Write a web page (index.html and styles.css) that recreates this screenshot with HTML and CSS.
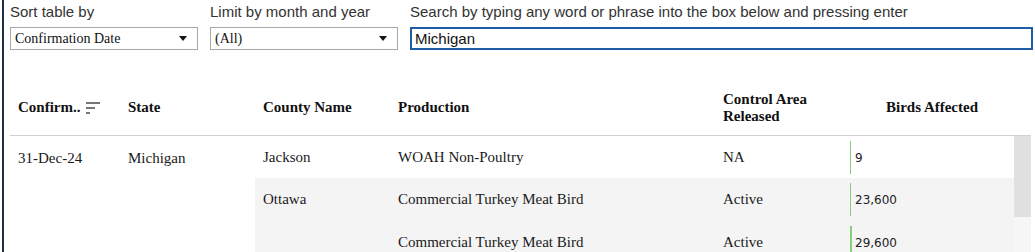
FILE: index.html
```html
<!DOCTYPE html>
<html>
<head>
<meta charset="utf-8">
<link rel="stylesheet" href="styles.css">
</head>
<body>
<div class="frame">
  <div class="controls">
    <div class="ctl ctl-sort">
      <div class="label">Sort table by</div>
      <div class="select"><span>Confirmation Date</span><span class="caret"></span></div>
    </div>
    <div class="ctl ctl-month">
      <div class="label">Limit by month and year</div>
      <div class="select"><span>(All)</span><span class="caret"></span></div>
    </div>
    <div class="ctl ctl-search">
      <div class="label">Search by typing any word or phrase into the box below and pressing enter</div>
      <div class="search">Michigan</div>
    </div>
  </div>
  <table class="grid">
    <colgroup>
      <col class="c1"><col class="c2"><col class="c3"><col class="c4"><col class="c5"><col class="c6"><col class="c7">
    </colgroup>
    <thead>
      <tr>
        <th><span class="sorthead">Confirm.. <svg class="sorticon" width="14" height="12" viewBox="0 0 14 12"><rect x="0" y="0" width="14" height="2" fill="#777"/><rect x="0" y="5" width="9" height="2" fill="#777"/><rect x="0" y="10" width="4" height="2" fill="#777"/></svg></span></th>
        <th>State</th>
        <th>County Name</th>
        <th>Production</th>
        <th>Control Area Released</th>
        <th class="center">Birds Affected</th>
        <th></th>
      </tr>
    </thead>
    <tbody>
      <tr>
        <td rowspan="3" class="plain">31-Dec-24</td>
        <td rowspan="3" class="plain">Michigan</td>
        <td>Jackson</td>
        <td>WOAH Non-Poultry</td>
        <td>NA</td>
        <td class="birds"><span class="track"><span class="bar" style="width:1px"></span></span><span class="num">9</span></td>
        <td rowspan="3" class="scroll"><div class="thumb"></div></td>
      </tr>
      <tr class="alt">
        <td>Ottawa</td>
        <td>Commercial Turkey Meat Bird</td>
        <td>Active</td>
        <td class="birds"><span class="track"><span class="bar" style="width:1px"></span></span><span class="num">23,600</span></td>
      </tr>
      <tr class="alt">
        <td></td>
        <td>Commercial Turkey Meat Bird</td>
        <td>Active</td>
        <td class="birds"><span class="track"><span class="bar" style="width:2px"></span></span><span class="num">29,600</span></td>
      </tr>
    </tbody>
  </table>
</div>
</body>
</html>
```
FILE: styles.css
```css
html, body {
  margin: 0;
  padding: 0;
  background: #fff;
  height: 100%;
  overflow: hidden;
}
.frame {
  margin-left: 2px;
  border-left: 2px solid #1d2b45;
  padding-left: 6px;
  padding-right: 2px;
  height: 100%;
  box-sizing: border-box;
}
.controls {
  display: flex;
  gap: 12px;
  padding-top: 3px;
}
.ctl-sort, .ctl-month { width: 188px; }
.ctl-search { flex: 1; }
.label {
  font-family: "Liberation Sans", Arial, sans-serif;
  font-size: 15px;
  color: #333;
  line-height: 18px;
  height: 18px;
  margin-bottom: 6px;
  white-space: nowrap;
}
.select {
  height: 23px;
  box-sizing: border-box;
  border: 1px solid #a8a8a8;
  display: flex;
  align-items: center;
  justify-content: space-between;
  padding: 0 10px 0 4px;
  font-family: "Liberation Serif", "Times New Roman", serif;
  font-size: 14px;
  color: #111;
}
.caret {
  width: 0;
  height: 0;
  border-left: 4px solid transparent;
  border-right: 4px solid transparent;
  border-top: 5px solid #111;
}
.search {
  height: 23px;
  box-sizing: border-box;
  border: 2px solid #1f5ca6;
  display: flex;
  align-items: center;
  padding-left: 3px;
  font-family: "Liberation Sans", Arial, sans-serif;
  font-size: 15px;
  color: #111;
}
.grid {
  margin-top: 32px;
  border-collapse: collapse;
  table-layout: fixed;
  width: 1021px;
  font-family: "Liberation Serif", "Times New Roman", serif;
}
.c1 { width: 110px; }
.c2 { width: 135px; }
.c3 { width: 135px; }
.c4 { width: 325px; }
.c5 { width: 135px; }
.c6 { width: 164px; }
.c7 { width: 17px; }
th {
  height: 51px;
  padding: 0 0 2px 8px;
  text-align: left;
  vertical-align: middle;
  font-size: 15px;
  font-weight: bold;
  line-height: 17px;
  color: #111;
  border-bottom: 1px solid #d0d0d0;
}
th.center { text-align: center; padding-left: 0; }
.sorthead { display: inline-flex; align-items: center; gap: 5px; white-space: nowrap; }
.sorticon { display: block; }
td {
  height: 41px;
  padding: 1px 0 0 8px;
  font-size: 15px;
  color: #1a1a1a;
  vertical-align: middle;
  white-space: nowrap;
}
tbody tr:nth-child(2) td, tbody tr:nth-child(3) td { height: 43px; padding-top: 0; }
tr.alt td { background: #f4f4f4; }
td.plain { vertical-align: top; padding-top: 14px; background: #fff; }
td.birds {
  padding-left: 0;
}
.track {
  display: inline-block;
  width: 5px;
  height: 33px;
  vertical-align: middle;
}
.bar {
  display: block;
  height: 33px;
  background: #86d07a;
}
.num {
  font-family: "DejaVu Sans", Verdana, sans-serif;
  font-size: 12px;
  color: #222;
  vertical-align: middle;
}
td.scroll {
  padding: 0;
  vertical-align: top;
  background: #f6f6f6;
}
.thumb {
  height: 81px;
  background: #e0e0e0;
}
```
